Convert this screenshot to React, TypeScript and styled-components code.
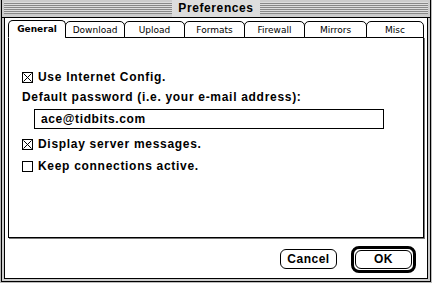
import React from 'react';
import styled, { createGlobalStyle } from 'styled-components';

const GlobalStyle = createGlobalStyle`
  html, body {
    margin: 0;
    padding: 0;
    background: #fff;
  }
`;

const chicago = `"Liberation Sans", Arial, sans-serif`;

const Window = styled.div`
  box-sizing: border-box;
  width: 432px;
  height: 283px;
  border: 1px solid #bbb;
  border-top: none;
  display: flex;
  flex-direction: column;
  font-family: ${chicago};
`;

const Frame = styled.div`
  flex: 1;
  display: flex;
  flex-direction: column;
  border: 1px solid #000;
  border-top: none;
  background: #ccc;
`;

const TitleBar = styled.div`
  box-sizing: border-box;
  height: 18px;
  padding: 2px 2px 3px;
  display: flex;
  align-items: center;
  justify-content: center;
  border-bottom: 1px solid #000;
  background: repeating-linear-gradient(
    to bottom,
    #ddd 0px,
    #ddd 1px,
    #888 1px,
    #888 2px
  );
  background-clip: content-box;
`;

const Title = styled.span`
  background: #ddd;
  padding: 0 6px;
  font-size: 12px;
  font-weight: bold;
  letter-spacing: 0.6px;
  line-height: 17px;
  color: #000;
`;

const Inner = styled.div`
  flex: 1;
  display: flex;
  padding: 0 2px 2px;
`;

const Body = styled.div`
  flex: 1;
  display: flex;
  flex-direction: column;
  background: #fff;
  border: 1px solid #000;
  border-top: none;
  padding: 2px 2px 0 2px;
`;

const TabRow = styled.div`
  display: flex;
  margin-left: 1px;
  height: 17px;
  position: relative;
  z-index: 1;
`;

const Tab = styled.div<{ $active?: boolean; $w: number }>`
  box-sizing: border-box;
  width: ${p => p.$w}px;
  margin-right: -1px;
  border: 1px solid #000;
  border-bottom: ${p => (p.$active ? '1px solid #fff' : '1px solid #000')};
  border-radius: 5px 5px 0 0;
  background: #fff;
  display: flex;
  align-items: center;
  justify-content: center;
  font-family: "DejaVu Sans", Verdana, sans-serif;
  font-size: 9px;
  font-weight: ${p => (p.$active ? 'bold' : 'normal')};
  color: #000;
  height: ${p => (p.$active ? 18 : 17)}px;
  margin-top: ${p => (p.$active ? 0 : 1)}px;
`;

const Panel = styled.div`
  box-sizing: border-box;
  margin-left: 1px;
  width: 416px;
  height: 201px;
  border: 1px solid #000;
  box-shadow: 1px 1px 0 #777;
  padding: 33px 0 0 13px;
  display: flex;
  flex-direction: column;
`;

const CheckRow = styled.div<{ $mt?: number }>`
  display: flex;
  align-items: center;
  gap: 5px;
  height: 12px;
  margin-top: ${p => p.$mt ?? 0}px;
  font-size: 12px;
  font-weight: bold;
  letter-spacing: 0.7px;
  color: #000;
`;

const Box = styled.span`
  box-sizing: border-box;
  width: 11px;
  height: 11px;
  border: 1px solid #000;
  display: inline-flex;
`;

const Label = styled.div`
  margin-top: 7px;
  font-size: 12px;
  font-weight: bold;
  letter-spacing: 0.7px;
  line-height: 14px;
  color: #000;
`;

const Field = styled.div`
  box-sizing: border-box;
  margin: 5px 0 0 12px;
  width: 350px;
  height: 20px;
  border: 1px solid #000;
  padding-left: 6px;
  display: flex;
  align-items: center;
  font-size: 12px;
  font-weight: bold;
  letter-spacing: 0.6px;
  color: #000;
`;

const ButtonRow = styled.div`
  flex: 1;
  display: flex;
  align-items: center;
  justify-content: flex-end;
  gap: 14px;
  padding-right: 9px;
  padding-top: 2px;
`;

const Button = styled.div`
  box-sizing: border-box;
  width: 57px;
  height: 20px;
  border: 1px solid #000;
  border-radius: 6px;
  background: #fff;
  display: flex;
  align-items: center;
  justify-content: center;
  font-size: 12px;
  font-weight: bold;
  letter-spacing: 0.5px;
  color: #000;
`;

const DefaultRing = styled.div`
  box-sizing: border-box;
  width: 65px;
  height: 27px;
  border: 3px solid #000;
  border-radius: 8px;
  padding: 1px;
  display: flex;
  & > div {
    flex: 1;
    width: auto;
    height: auto;
  }
`;

const Check = ({ on }: { on?: boolean }) => (
  <Box>
    {on && (
      <svg width="9" height="9" viewBox="0 0 9 9">
        <path d="M0.5 0.5 L8.5 8.5 M8.5 0.5 L0.5 8.5" stroke="#000" strokeWidth="1" />
      </svg>
    )}
  </Box>
);

const tabs: [string, number][] = [
  ['General', 58],
  ['Download', 60],
  ['Upload', 61],
  ['Formats', 61],
  ['Firewall', 61],
  ['Mirrors', 63],
  ['Misc', 58],
];

export default function App() {
  return (
    <>
      <GlobalStyle />
      <Window>
        <Frame>
          <TitleBar>
            <Title>Preferences</Title>
          </TitleBar>
          <Inner>
            <Body>
              <TabRow>
                {tabs.map(([name, w], i) => (
                  <Tab key={name} $w={w} $active={i === 0}>
                    {name}
                  </Tab>
                ))}
              </TabRow>
              <Panel>
                <CheckRow>
                  <Check on />
                  Use Internet Config.
                </CheckRow>
                <Label>Default password (i.e. your e-mail address):</Label>
                <Field>ace@tidbits.com</Field>
                <CheckRow $mt={9}>
                  <Check on />
                  Display server messages.
                </CheckRow>
                <CheckRow $mt={10}>
                  <Check />
                  Keep connections active.
                </CheckRow>
              </Panel>
              <ButtonRow>
                <Button>Cancel</Button>
                <DefaultRing>
                  <Button>OK</Button>
                </DefaultRing>
              </ButtonRow>
            </Body>
          </Inner>
        </Frame>
      </Window>
    </>
  );
}
